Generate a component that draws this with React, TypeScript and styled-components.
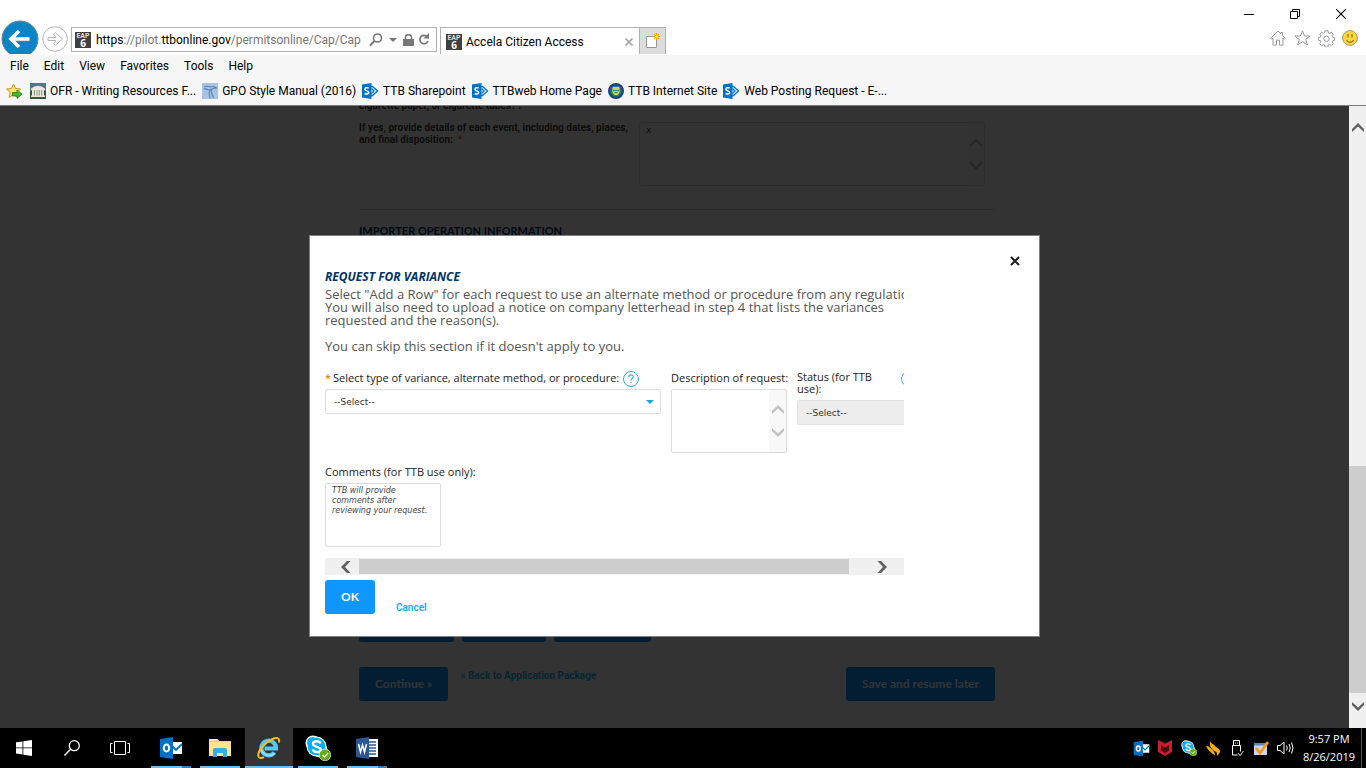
import React from 'react';
import styled, { createGlobalStyle, css } from 'styled-components';

const chromeFont = `Roboto, "Open Sans", sans-serif`;
const bodyFont = `"Open Sans", "Noto Sans", sans-serif`;
const fieldFont = `"DejaVu Sans", sans-serif`;

const GlobalStyle = createGlobalStyle`
  *, *::before, *::after { box-sizing: border-box; }
  body { margin: 0; overflow: hidden; background: #fff; font-family: ${bodyFont}; }
  button, input, select, textarea { font: inherit; margin: 0; }
  svg { display: block; flex: none; }
`;

const Screen = styled.div`
  display: flex;
  flex-direction: column;
  height: 100vh;
`;

const plainButton = css`
  display: flex;
  align-items: center;
  justify-content: center;
  padding: 0;
  border: 0;
  background: none;
  cursor: pointer;
`;

/* Browser window */

const BrowserHeader = styled.header`
  flex: none;
  border-bottom: 1px solid #7c7c7c;
  font: 12px/16px ${chromeFont};
  color: #000;
`;
const TitleBar = styled.div`
  display: flex;
  justify-content: flex-end;
  height: 20px;
  padding-top: 4px;
  padding-right: 2px;
`;
const WindowButton = styled.button`
  ${plainButton}
  width: 46px;
  height: 20px;
`;
const NavBar = styled.div`
  display: flex;
  align-items: flex-start;
  height: 35px;
`;
const BackButton = styled.button`
  ${plainButton}
  width: 38px;
  height: 34px;
  margin-left: 1px;
  overflow: hidden;
  align-items: flex-start;
`;
const ForwardButton = styled.button`
  ${plainButton}
  width: 28px;
  height: 38px;
  margin-left: 2px;
`;
const AddressBar = styled.div`
  display: flex;
  align-items: center;
  width: 366px;
  height: 25px;
  margin: 7px 3px 0 2px;
  padding: 0 4px 0 3px;
  border: 1px solid #b0b0b0;
`;
const Address = styled.div`
  flex: 1;
  min-width: 0;
  margin-left: 5px;
  overflow: hidden;
  white-space: nowrap;
  color: #767676;
  outline: none;
  b { font-weight: 400; color: #000; }
`;
const IconButton = styled.button<{ $w?: number }>`
  ${plainButton}
  width: ${p => p.$w ?? 20}px;
  height: 20px;
`;
const Tab = styled.div`
  display: flex;
  align-items: center;
  width: 200px;
  height: 27px;
  margin-top: 7px;
  padding: 2px 3px 0 5px;
  border: 1px solid #b0b0b0;
  border-bottom: 0;
`;
const TabTitle = styled.span`
  flex: 1;
  margin-left: 4px;
`;
const NewTabButton = styled.button`
  ${plainButton}
  width: 26px;
  height: 27px;
  margin-top: 7px;
  border: 1px solid #b0b0b0;
  border-width: 1px 1px 0 0;
  background: #dcdcdc;
`;
const Tools = styled.div`
  display: flex;
  gap: 4px;
  margin: 8px 6px 0 auto;
`;
const MenuBar = styled.nav`
  display: flex;
  gap: 15px;
  height: 23px;
  padding: 2px 10px 4px;
  background: #f6f6f6;
`;
const MenuItem = styled.button`
  ${plainButton}
`;
const Favorites = styled.nav`
  display: flex;
  align-items: center;
  gap: 6px;
  height: 27px;
  padding: 0 6px 1px;
  background: #f6f6f6;
`;
const Favorite = styled.a`
  display: flex;
  align-items: center;
  gap: 4px;
  color: #000;
  text-decoration: none;
  white-space: nowrap;
  &:first-of-type { margin-left: 2px; }
`;

/* Page behind the dialog */

const Viewport = styled.div`
  display: flex;
  flex: 1;
  min-height: 0;
`;
const Page = styled.main`
  position: relative;
  flex: 1;
  overflow: hidden;
`;
const Form = styled.div`
  max-width: 641px;
  margin: -6px auto 0;
  padding-left: 5px;
  font: 700 10px/12px Roboto, sans-serif;
  color: #444;
`;
const Question = styled.div`
  display: grid;
  grid-template-columns: 280px 346px;
  margin-top: 10px;
  padding-bottom: 23px;
  border-bottom: 1px solid #ddd;
`;
const Required = styled.span`
  margin-right: 2px;
  color: #d96a00;
`;
const SectionTitle = styled.h2`
  margin: 14px 0 0;
  font: 700 11px/13px Lato, sans-serif;
  color: #003366;
`;
const RowActions = styled.div`
  display: flex;
  gap: 8px;
  margin-top: 371px;
`;
const PrimaryButton = styled.button<{ $w?: number }>`
  ${plainButton}
  width: ${p => (p.$w ? `${p.$w}px` : 'auto')};
  height: 34px;
  padding: 0 16px;
  border-radius: 3px;
  background: #0f96ff;
  color: #fff;
  font: 700 12px/16px Lato, sans-serif;
`;
const FormFooter = styled.div`
  display: flex;
  align-items: flex-start;
  margin-top: 25px;
  ${PrimaryButton}:last-child { margin-left: auto; }
`;
const TextLink = styled.a`
  font: 700 10px/12px Roboto, sans-serif;
  color: #1bb5f5;
  text-decoration: none;
`;
const BackLink = styled(TextLink)`
  margin: 3px 0 0 12px;
`;

/* Dialog */

const Overlay = styled.div`
  position: absolute;
  inset: 0;
  display: flex;
  align-items: flex-start;
  justify-content: center;
  padding-top: 129px;
  background: rgba(0, 0, 0, 0.8);
`;
const Dialog = styled.section`
  width: 731px;
  max-width: 100%;
  padding: 14px 14px 22px 15px;
  border: 1px solid #808080;
  background: #fff;
`;
const CloseButton = styled.button`
  ${plainButton}
  width: 20px;
  height: 22px;
  margin-left: auto;
`;
const DialogTitle = styled.h1`
  margin: -3px 0 3px;
  font: italic 700 12px/16px ${bodyFont};
  color: #003366;
`;
const Clip = styled.div`
  max-width: 579px;
  overflow: hidden;
`;
const Wide = styled.div`
  width: 640px;
  padding-top: 3px;
  margin-top: -3px;
`;
const Instructions = styled.p`
  margin: 0 0 13px;
  font: 13px/13px ${bodyFont};
  color: #555;
`;
const Fields = styled.div`
  display: flex;
  flex-wrap: wrap;
  align-items: flex-start;
  gap: 12px 10px;
  padding: 5px 0 11px;
`;
const Field = styled.div<{ $w: number }>`
  width: ${p => p.$w}px;
`;
const LabelRow = styled.div`
  display: flex;
  align-items: flex-start;
  margin-bottom: 5px;
  font: 11px/13px ${bodyFont};
  color: #222;
  white-space: nowrap;
`;
const WrappingLabel = styled.label`
  width: 100px;
  padding-right: 16px;
  line-height: 12px;
  white-space: normal;
`;
const HelpButton = styled.button`
  ${plainButton}
  flex: none;
  width: 16px;
  height: 13px;
  margin-left: 4px;
  overflow: visible;
`;
const SelectBox = styled.div<{ $muted?: boolean }>`
  display: flex;
  align-items: center;
  height: 25px;
  padding-right: 6px;
  border: 1px solid ${p => (p.$muted ? '#e2e2e2' : '#ddd')};
  border-radius: 2px;
  background: ${p => (p.$muted ? '#ededed' : '#fff')};
`;
const Select = styled.select`
  flex: 1;
  appearance: none;
  padding: 0 8px;
  border: 0;
  background: transparent;
  color: #333;
  opacity: 1;
  font: 9px/12px ${fieldFont};
`;
const AreaBox = styled.div`
  display: flex;
  height: 64px;
  border: 1px solid #ddd;
  border-radius: 2px;
`;
const TextArea = styled.textarea<{ $italic?: boolean }>`
  flex: 1;
  min-width: 0;
  padding: 2px 6px;
  border: 0;
  background: transparent;
  resize: none;
  overflow: hidden;
  color: #444;
  font: ${p => (p.$italic ? 'italic 8px' : '9px')}/10px ${fieldFont};
`;
const AreaScroll = styled.div`
  display: flex;
  flex-direction: column;
  align-items: center;
  justify-content: center;
  gap: 12px;
  width: 17px;
  background: #f8f8f8;
`;
const HScroll = styled.div`
  display: flex;
  align-items: center;
  height: 17px;
  background: #f0f0f0;
`;
const HScrollButton = styled.button<{ $w: number; $pad: number }>`
  ${plainButton}
  justify-content: flex-start;
  width: ${p => p.$w}px;
  height: 17px;
  padding-left: ${p => p.$pad}px;
`;
const HThumb = styled.div`
  flex: 1;
  height: 15px;
  background: #cdcdcd;
`;
const DialogActions = styled.div`
  display: flex;
  align-items: flex-end;
  gap: 21px;
  margin-top: 5px;
`;

/* Page scroll bar */

const VScroll = styled.div`
  display: flex;
  flex-direction: column;
  width: 17px;
  padding-bottom: 7px;
  background: #f0f0f0;
`;
const VScrollButton = styled.button<{ $h: number }>`
  ${plainButton}
  height: ${p => p.$h}px;
`;
const VSpace = styled.div`
  flex: 318;
`;
const VThumb = styled.div`
  flex: 227;
  background: #cdcdcd;
`;

/* Task bar */

const TaskBar = styled.footer`
  display: flex;
  flex: none;
  height: 40px;
  background: #000;
  color: #fff;
`;
const TaskButton = styled.button`
  ${plainButton}
  width: 48px;
  height: 40px;
`;
const Apps = styled.div`
  display: flex;
  gap: 1px;
  margin-left: 3px;
`;
const AppButton = styled(TaskButton)<{ $active?: boolean; $many?: boolean }>`
  position: relative;
  background: ${p => (p.$active ? '#333' : 'none')};
  &::after {
    content: '';
    position: absolute;
    bottom: 0;
    left: ${p => (p.$active ? 0 : 4)}px;
    right: ${p => (p.$active ? 0 : 4)}px;
    height: 2px;
    background: ${p => (p.$many ? 'linear-gradient(90deg, #76b9ed 78%, #4b7a9f 78%)' : '#76b9ed')};
  }
`;
const Tray = styled.div`
  display: flex;
  align-items: center;
  margin-left: auto;
`;
const TrayButton = styled.button`
  ${plainButton}
  width: 24px;
  height: 40px;
`;
const Clock = styled.time`
  width: 64px;
  text-align: center;
  font: 11px/18px ${bodyFont};
`;
const ShowDesktop = styled.button`
  ${plainButton}
  width: 5px;
  height: 40px;
  border-left: 1px solid #555;
`;

/* Icons */

const Chevron = ({ dir, color = '#606060' }: { dir: 'up' | 'down' | 'left' | 'right'; color?: string }) => {
  const d = {
    up: 'M0 8 6 2l6 6v3L6 5.500l-6 5.500z',
    down: 'M0 4l6 6 6-6V1L6 6.500 0 1z',
    left: 'M7 0 1 6l6 6h3.500L5 6l5.500-6z',
    right: 'M5 0l6 6-6 6H1.500L7 6 1.500 0z',
  }[dir];
  return (
    <svg width="12" height="12" viewBox="0 0 12 12"><path d={d} fill={color} /></svg>
  );
};

const SiteIcon = () => (
  <svg width="16" height="16" viewBox="0 0 16 16">
    <path fill="#404040" d="M0 0h16v16H0z" />
    <text x="8" y="6" textAnchor="middle" fontFamily="Roboto, sans-serif" fontWeight="700" fontSize="7" fill="#ddd">EAP</text>
    <text x="8" y="15" textAnchor="middle" fontFamily="Open Sans, sans-serif" fontWeight="700" fontSize="10" fill="#fff">6</text>
  </svg>
);

const SharePointIcon = () => (
  <svg width="17" height="16" viewBox="0 0 17 16">
    <g fill="none" stroke="#0072c6" strokeWidth="1.3">
      <path d="M9 3.5h1.500l5 4.500-5 4.500H9" /><path d="M9.500 5.500 12 8l-2.500 2.500" />
    </g>
    <path fill="#0072c6" d="M0 1.500 9.500 0v16L0 14.500z" />
    <path d="M6.800 5.200C4.500 4 2.800 5 3 6.300c.3 1.700 3.700 1.500 3.700 3.300 0 1.600-2.200 1.900-4 .9" fill="none" stroke="#fff" strokeWidth="1.500" />
  </svg>
);

const AddFavoriteIcon = () => (
  <svg width="16" height="16" viewBox="0 0 16 16">
    <path d="M7.500 1 9.600 5.500l4.900.5-3.600 3.400 1 4.900-4.400-2.500L3.100 14.300l1-4.900L.5 6l4.900-.5z" fill="#ffe16b" stroke="#c99728" />
    <path d="M6.500 9.500H11V7l5 4.200-5 4.200V13H6.500z" fill="#3fb82c" stroke="#267f1b" strokeWidth=".8" />
  </svg>
);

const FavIcon = ({ kind }: { kind: string }) => {
  if (kind === 'ofr')
    return (
      <svg width="16" height="16" viewBox="0 0 16 16">
        <path fill="#3f7f8a" d="M0 0h16v8H0z" /><path fill="#35583a" d="M0 8h16v8H0z" />
        <path fill="#e9e6da" d="M1 5.500Q8 0 15 5.500V7H1zM2 7h12v6H2zM1 12.500h14V14H1z" />
        <path d="M4.500 7v5.500M7 7v5.500M9.300 7v5.500M11.700 7v5.500" stroke="#8d9488" />
      </svg>
    );
  if (kind === 'gpo')
    return (
      <svg width="16" height="16" viewBox="0 0 16 16">
        <path fill="#a9c3e6" d="M0 0h16v16H0z" />
        <path d="M2 4c3-2 6 .5 10-.5l2.500 1.500-3.500.500c-3 1-1.500 5 .500 9.500M2 6c2.500-.5 4 .5 5.500 1M9 6c-3 2-2 6-1 9.500" fill="none" stroke="#5681b6" strokeWidth="1.100" />
      </svg>
    );
  if (kind === 'seal')
    return (
      <svg width="16" height="16" viewBox="0 0 16 16">
        <circle cx="8" cy="8" r="8" fill="#17496f" /><circle cx="8" cy="8" r="5.800" fill="#2e6f91" />
        <path d="M4.500 4h7v5c0 2-2 3-3.500 3.500C6.500 12 4.500 11 4.500 9z" fill="#d8cc4b" />
        <path d="M5 7.500h6M6.500 9.500h3" stroke="#4b7b62" />
      </svg>
    );
  return <SharePointIcon />;
};

const Outlook = ({ size }: { size: number }) => (
  <svg width={size} height={size} viewBox="0 0 24 24">
    <path fill="#fff" d="M12 6h11v12H12z" />
    <path d="m13 10 4 4 6-6" fill="none" stroke="#0072c6" strokeWidth="1.800" />
    <path fill="#0072c6" d="M1 3 14 1v22L1 21z" />
    <ellipse cx="7.500" cy="12" rx="2.700" ry="3.500" fill="none" stroke="#fff" strokeWidth="2" />
  </svg>
);

const Skype = ({ size }: { size: number }) => (
  <svg width={size} height={size} viewBox="0 0 26 26">
    <g fill="#fff"><circle cx="8" cy="8" r="7.500" /><circle cx="15" cy="15" r="7.500" /><circle cx="11.500" cy="11.500" r="10" /></g>
    <g fill="#00aff0"><circle cx="7.500" cy="7.500" r="5.500" /><circle cx="15.500" cy="15.500" r="5.500" /><circle cx="11.500" cy="11.500" r="8.800" /></g>
    <path d="M15.500 8.500C14.500 5.500 8 5.500 8 9c0 3.600 7.700 2 7.700 5.500 0 3.400-6.700 3.500-8-.2" fill="none" stroke="#fff" strokeWidth="2.400" />
    <circle cx="20" cy="20" r="5.800" fill="#62ae10" stroke="#fff" strokeWidth=".6" />
    <path d="m17.500 20 2 2 3.500-4" fill="none" stroke="#fff" strokeWidth="1.400" />
  </svg>
);

const favorites = [
  { kind: 'ofr', label: 'OFR - Writing Resources F...' },
  { kind: 'gpo', label: 'GPO Style Manual (2016)' },
  { kind: 'sp', label: 'TTB Sharepoint' },
  { kind: 'sp', label: 'TTBweb Home Page' },
  { kind: 'seal', label: 'TTB Internet Site' },
  { kind: 'sp', label: 'Web Posting Request - E-...' },
];

const Help = () => (
  <HelpButton aria-label="Help">
    <svg width="16" height="16" viewBox="0 0 16 16" overflow="visible">
      <circle cx="8" cy="9" r="7.500" fill="none" stroke="#35aee2" />
      <path d="M5.800 7c.2-3 4.500-2.700 4.400-.2 0 1.700-2.200 1.700-2.200 3.700M8 12v1.300" fill="none" stroke="#35aee2" strokeWidth="1.100" />
    </svg>
  </HelpButton>
);

const Header = () => (
  <BrowserHeader>
    <TitleBar>
      <WindowButton aria-label="Minimize"><svg width="10" height="10" viewBox="0 0 10 10"><path d="M0 5.500h10" stroke="#000" /></svg></WindowButton>
      <WindowButton aria-label="Restore"><svg width="10" height="10" viewBox="0 0 10 10"><path d="M.5 2.500h7v7h-7zM2.500 2.500v-2h7v7h-2" fill="none" stroke="#000" /></svg></WindowButton>
      <WindowButton aria-label="Close"><svg width="10" height="10" viewBox="0 0 10 10"><path d="m0 0 10 10M10 0 0 10" stroke="#000" strokeWidth="1.100" /></svg></WindowButton>
    </TitleBar>
    <NavBar>
      <BackButton aria-label="Back">
        <svg width="38" height="38" viewBox="0 0 38 38">
          <circle cx="19" cy="19" r="18" fill="#0a84c4" stroke="#6f8894" />
          <path d="M28.500 19H11M18 11l-8 8 8 8" fill="none" stroke="#fff" strokeWidth="3.600" />
        </svg>
      </BackButton>
      <ForwardButton aria-label="Forward">
        <svg width="26" height="26" viewBox="0 0 26 26">
          <circle cx="13" cy="13" r="12.300" fill="#fff" stroke="#b5b5b5" />
          <path d="M6 11.500h8L11.500 8l2-1.200L20.500 13l-7 6.200-2-1.200 2.500-3.500H6z" fill="none" stroke="#b5b5b5" />
        </svg>
      </ForwardButton>
      <AddressBar>
        <SiteIcon />
        <Address role="textbox" aria-label="Address" contentEditable suppressContentEditableWarning>
          <b>https</b>://pilot.<b>ttbonline.gov</b>/permitsonline/Cap/Cap
        </Address>
        <IconButton aria-label="Search"><svg width="14" height="14" viewBox="0 0 14 14"><circle cx="8.500" cy="5" r="4" fill="none" stroke="#777" strokeWidth="1.600" /><path d="M5.500 8 1 12.500" stroke="#777" strokeWidth="2" /></svg></IconButton>
        <IconButton $w={14} aria-label="Show address list"><svg width="8" height="4" viewBox="0 0 8 4"><path d="M0 0h8L4 4z" fill="#777" /></svg></IconButton>
        <IconButton $w={16} aria-label="Security report"><svg width="11" height="12" viewBox="0 0 11 12"><path d="M0 5h11v7H0z" fill="#777" /><path d="M2.500 6V3.500a3 2.800 0 0 1 6 0V6" fill="none" stroke="#777" strokeWidth="1.500" /></svg></IconButton>
        <IconButton $w={16} aria-label="Refresh"><svg width="12" height="13" viewBox="0 0 12 13"><path d="M9 3.500A4.200 4.200 0 1 0 10 8" fill="none" stroke="#777" strokeWidth="1.700" /><path d="M11 0v5.500H5.500z" fill="#777" /></svg></IconButton>
      </AddressBar>
      <Tab>
        <SiteIcon />
        <TabTitle>Accela Citizen Access</TabTitle>
        <IconButton $w={14} aria-label="Close tab"><svg width="8" height="8" viewBox="0 0 8 8"><path d="m.5.5 7 7M7.500.5l-7 7" stroke="#aaa" strokeWidth="1.800" /></svg></IconButton>
      </Tab>
      <NewTabButton aria-label="New tab">
        <svg width="14" height="16" viewBox="0 0 14 16">
          <path d="M.5 3.500h10v11H.5z" fill="#fff" stroke="#999" />
          <path d="M10.500 0v7M7 3.500h7M8 1l5 5M13 1 8 6" stroke="#f0a020" strokeWidth="1.100" /><circle cx="10.500" cy="3.500" r="1.500" fill="#ffd45c" />
        </svg>
      </NewTabButton>
      <Tools>
        <IconButton aria-label="Home"><svg width="16" height="16" viewBox="0 0 16 16"><path d="M.7 8.300 8 1l2.700 2.700V2.500h2V5.700l2.600 2.600-1 1-1.300-1.200v7h-3.500v-5h-3v5H3v-7L1.700 9.300z" fill="#fff" stroke="#999" /></svg></IconButton>
        <IconButton aria-label="Favorites"><svg width="17" height="16" viewBox="0 0 17 16"><path d="m8.500.8 2 5.200h5.700l-4.500 3.500 1.700 5.500-4.900-3.300L3.600 15l1.700-5.500L.8 6h5.700z" fill="#fff" stroke="#999" /></svg></IconButton>
        <IconButton aria-label="Settings"><svg width="17" height="17" viewBox="0 0 17 17"><path d="M7 .8h3l.3 2 1.200.6 1.800-1.200 1.900 2-1.100 1.700.5 1.200 2 .4v2.800l-2 .4-.5 1.200 1.100 1.700-1.900 2-1.800-1.200-1.200.5-.3 2H7l-.4-2-1.200-.5-1.700 1.200-2-2 1.200-1.700-.5-1.200-2-.4V7.500l2-.4.5-1.200-1.200-1.700 2-2 1.700 1.200 1.200-.6z" fill="#fff" stroke="#999" /><circle cx="8.500" cy="8.800" r="2.700" fill="#fff" stroke="#999" /></svg></IconButton>
        <IconButton aria-label="Send feedback"><svg width="16" height="16" viewBox="0 0 16 16"><circle cx="8" cy="8" r="7.400" fill="#fcd53f" stroke="#a69a72" /><path d="M6 4v3.500M10 4v3.500M4.500 10c1.500 3 5.500 3 7 0" fill="none" stroke="#9a7b1d" strokeWidth="1.300" /></svg></IconButton>
      </Tools>
    </NavBar>
    <MenuBar>
      {['File', 'Edit', 'View', 'Favorites', 'Tools', 'Help'].map(m => <MenuItem key={m}>{m}</MenuItem>)}
    </MenuBar>
    <Favorites>
      <IconButton $w={16} aria-label="Add to favorites bar"><AddFavoriteIcon /></IconButton>
      {favorites.map(f => (
        <Favorite href="#" key={f.label}><FavIcon kind={f.kind} />{f.label}</Favorite>
      ))}
    </Favorites>
  </BrowserHeader>
);

const VarianceDialog = () => (
  <Overlay>
    <Dialog role="dialog" aria-labelledby="variance-title">
      <CloseButton aria-label="Close dialog"><svg width="10" height="10" viewBox="0 0 10 10"><path d="m1 1 8 8M9 1 1 9" stroke="#222" strokeWidth="2.200" /></svg></CloseButton>
      <Clip>
        <Wide>
          <DialogTitle id="variance-title">REQUEST FOR VARIANCE</DialogTitle>
          <Instructions>
            Select "Add a Row" for each request to use an alternate method or procedure from any regulation.<br />
            You will also need to upload a notice on company letterhead in step 4 that lists the variances<br />
            requested and the reason(s).
          </Instructions>
          <Instructions>You can skip this section if it doesn't apply to you.</Instructions>
          <Fields>
            <Field $w={336}>
              <LabelRow><label htmlFor="type"><Required>*</Required>Select type of variance, alternate method, or procedure:</label><Help /></LabelRow>
              <SelectBox>
                <Select id="type"><option>--Select--</option></Select>
                <svg width="8" height="4" viewBox="0 0 8 4"><path d="M0 0h8L4 4z" fill="#1ba1e2" /></svg>
              </SelectBox>
            </Field>
            <Field $w={116}>
              <LabelRow><label htmlFor="description">Description of request:</label></LabelRow>
              <AreaBox>
                <TextArea id="description" />
                <AreaScroll><Chevron dir="up" color="#c0c0c0" /><Chevron dir="down" color="#c0c0c0" /></AreaScroll>
              </AreaBox>
            </Field>
            <Field $w={132}>
              <LabelRow><WrappingLabel htmlFor="status">Status (for TTB use):</WrappingLabel><Help /></LabelRow>
              <SelectBox $muted><Select id="status"><option>--Select--</option></Select></SelectBox>
            </Field>
            <Field $w={116}>
              <LabelRow><label htmlFor="comments">Comments (for TTB use only):</label></LabelRow>
              <AreaBox><TextArea $italic id="comments" readOnly value="TTB will provide comments after reviewing your request." /></AreaBox>
            </Field>
          </Fields>
        </Wide>
        <HScroll>
          <HScrollButton $w={34} $pad={15} aria-label="Scroll left"><Chevron dir="left" /></HScrollButton>
          <HThumb />
          <HScrollButton $w={55} $pad={27} aria-label="Scroll right"><Chevron dir="right" /></HScrollButton>
        </HScroll>
      </Clip>
      <DialogActions>
        <PrimaryButton>OK</PrimaryButton>
        <TextLink href="#">Cancel</TextLink>
      </DialogActions>
    </Dialog>
  </Overlay>
);

const Tasks = () => (
  <TaskBar>
    <TaskButton aria-label="Start"><svg width="16" height="16" viewBox="0 0 16 16"><path fill="#fff" d="M0 2.300 6.500 1.400v6.100H0zM7.300 1.300 16 0v7.500H7.300zM0 8.300h6.500v6.200L0 13.600zM7.300 8.300H16V16l-8.700-1.300z" /></svg></TaskButton>
    <TaskButton aria-label="Search"><svg width="16" height="16" viewBox="0 0 16 16"><circle cx="10.300" cy="5.700" r="5" fill="none" stroke="#fff" strokeWidth="1.300" /><path d="M6.600 9.300.5 15.500" stroke="#fff" strokeWidth="1.400" /></svg></TaskButton>
    <TaskButton aria-label="Task view"><svg width="20" height="14" viewBox="0 0 20 14"><path d="M4.500.5h11v13h-11zM2.500 2.500h-2v9h2M17.500 2.500h2v9h-2" fill="none" stroke="#fff" /></svg></TaskButton>
    <Apps>
      <AppButton $many aria-label="Outlook"><Outlook size={24} /></AppButton>
      <AppButton aria-label="File Explorer">
        <svg width="22" height="20" viewBox="0 0 22 20">
          <path d="M0 1h9l1 2h12v15H0z" fill="#f8cf62" /><path d="M0 4h22v14H0z" fill="#ffe48f" /><path d="M1 1h7v1.500H1z" fill="#fff3c4" />
          <path d="M4 11.500q0-1.500 1.500-1.500h11q1.500 0 1.500 1.500V19h-4v-4H8v4H4z" fill="#35aee8" />
        </svg>
      </AppButton>
      <AppButton $active aria-label="Internet Explorer">
        <svg width="24" height="24" viewBox="0 0 24 24">
          <path d="M17.500 16.500A7.300 7.300 0 1 1 19 12.500H7.500" fill="none" stroke="#56c6f2" strokeWidth="4.200" />
          <path d="M17.500 17.500A8.300 8.300 0 0 1 4 11" fill="none" stroke="#a8e7fb" strokeWidth="1.200" />
          <path d="M21.800 6.500C23 3 21 .5 15.500 3 8 6.500 0 15 1.500 20.500c.7 2 3 2 5.500.7" fill="none" stroke="#f3bd1c" strokeWidth="2" />
        </svg>
      </AppButton>
      <AppButton aria-label="Skype for Business"><Skype size={26} /></AppButton>
      <AppButton $many aria-label="Word">
        <svg width="24" height="24" viewBox="0 0 24 24">
          <path fill="#fff" d="M12 3h11v18H12z" /><path d="M14 6h7M14 9h7M14 12h7M14 15h7M14 18h7" stroke="#2b579a" strokeWidth="1.300" />
          <path fill="#2b579a" d="M1 3 14 1v22L1 21z" /><path d="m3.500 8 2 8 2-7 2 7 2-8" fill="none" stroke="#fff" strokeWidth="1.500" />
        </svg>
      </AppButton>
    </Apps>
    <Tray>
      <TrayButton aria-label="Outlook notifications"><Outlook size={17} /></TrayButton>
      <TrayButton aria-label="Antivirus"><svg width="14" height="16" viewBox="0 0 14 16"><path d="M0 0 7 3.500 14 0v12l-7 4-7-4z" fill="#c8202f" /><path d="m3 5 4 2.500L11 5v5.500L7 13l-4-2.500z" fill="#4d0810" /></svg></TrayButton>
      <TrayButton aria-label="Skype status"><Skype size={16} /></TrayButton>
      <TrayButton aria-label="Java update"><svg width="15" height="15" viewBox="0 0 15 15"><path d="M4 0c1 3 4 3 5 5 2 2 5 3 5 5s-2 4-3 5c0-2 .5-3-1-4C7 9 3 7 4 0zM0 5c3 0 4 2 6 3.500S9 12 9 14.500C7 13 2 10 0 5z" fill="#f5ab1c" /></svg></TrayButton>
      <TrayButton aria-label="Safely remove hardware"><svg width="13" height="17" viewBox="0 0 13 17"><path d="M2.500 5V.5h6V5M1.500 5.500h8v6M1.500 5.500v9.500h5M4.500 2.500v1M6.500 2.500v1" fill="none" stroke="#fff" /><path d="m7 13 2 2.500L12.500 11" fill="none" stroke="#aaa" strokeWidth="1.200" /></svg></TrayButton>
      <TrayButton aria-label="Compliance"><svg width="15" height="15" viewBox="0 0 15 15"><path d="M0 2h13v12H0z" fill="#c9d8ee" /><path d="M0 2h13v2.500H0z" fill="#5c82c4" /><path d="m2 7 4 5L14 1" fill="none" stroke="#f39a18" strokeWidth="2.800" /></svg></TrayButton>
      <TrayButton aria-label="Volume"><svg width="17" height="14" viewBox="0 0 17 14"><path d="M.5 4.500H3L7 1v12L3 9.500H.5zM9.500 4.500q1.500 2.500 0 5M12 3q2.500 4 0 8M14.500 1.500q3 5.500 0 11" fill="none" stroke="#fff" /></svg></TrayButton>
      <Clock>9:57 PM<br />8/26/2019</Clock>
      <ShowDesktop aria-label="Show desktop" />
    </Tray>
  </TaskBar>
);

export default function App() {
  return (
    <Screen>
      <GlobalStyle />
      <Header />
      <Viewport>
        <Page>
          <Form>
            <div>cigarette paper, or cigarette tubes? : <Required>*</Required></div>
            <Question>
              <label htmlFor="details">If yes, provide details of each event, including dates, places, and final disposition: &nbsp;<Required>*</Required></label>
              <AreaBox>
                <TextArea id="details" defaultValue="x" />
                <AreaScroll><Chevron dir="up" color="#c0c0c0" /><Chevron dir="down" color="#c0c0c0" /></AreaScroll>
              </AreaBox>
            </Question>
            <SectionTitle>IMPORTER OPERATION INFORMATION</SectionTitle>
            <RowActions>
              <PrimaryButton $w={95} aria-label="Add a row" />
              <PrimaryButton $w={84} aria-label="Edit selected" />
              <PrimaryButton $w={97} aria-label="Delete selected" />
            </RowActions>
            <FormFooter>
              <PrimaryButton>Continue »</PrimaryButton>
              <BackLink href="#">« Back to Application Package</BackLink>
              <PrimaryButton>Save and resume later</PrimaryButton>
            </FormFooter>
          </Form>
          <VarianceDialog />
        </Page>
        <VScroll>
          <VScrollButton $h={42} aria-label="Scroll up"><Chevron dir="up" /></VScrollButton>
          <VSpace />
          <VThumb />
          <VScrollButton $h={28} aria-label="Scroll down"><Chevron dir="down" /></VScrollButton>
        </VScroll>
      </Viewport>
      <Tasks />
    </Screen>
  );
}
